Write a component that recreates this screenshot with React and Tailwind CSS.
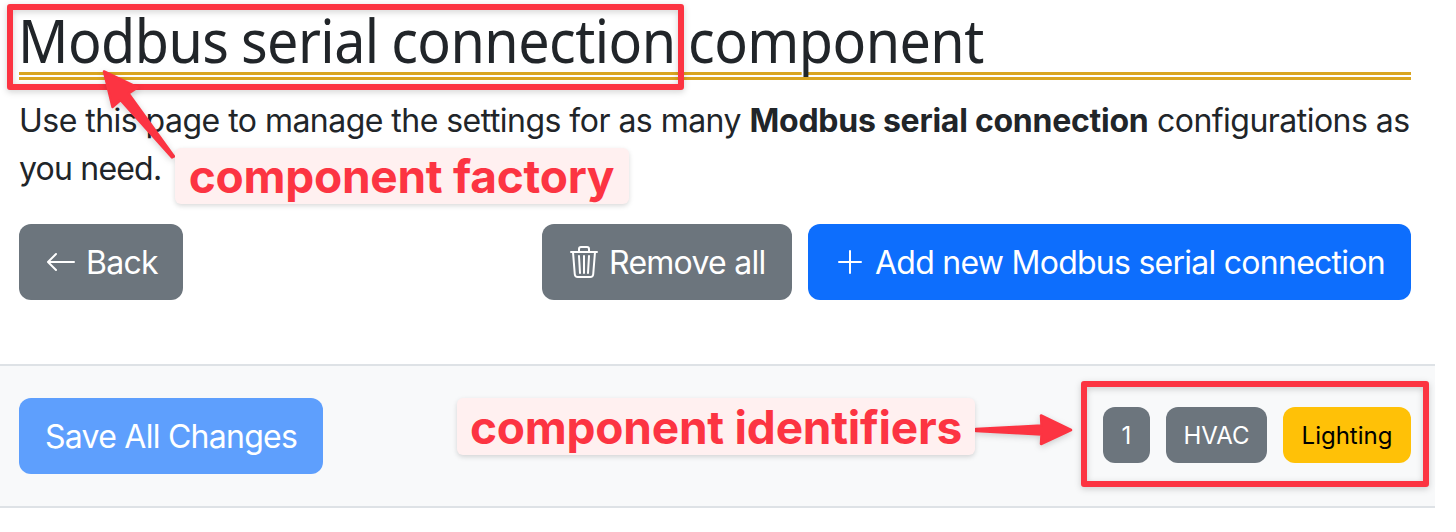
import { BsArrowLeft, BsPlusLg, BsTrash3 } from "react-icons/bs";

const button =
  "flex h-[76px] items-center rounded-xl pt-0.5 text-[32px] leading-[48px] tracking-[-0.74px] whitespace-nowrap text-white";
const badge =
  "flex h-14 items-center justify-center rounded-xl pt-0.5 text-2xl whitespace-nowrap";
const callout =
  "absolute flex items-center justify-center rounded-md bg-[#fff0f0] font-bold text-[#fc3442] text-[46px] leading-none whitespace-nowrap shadow-[0_2px_5px_rgba(0,0,0,0.15)]";
const frame =
  "absolute rounded-[3px] border-6 border-[#fc3442] drop-shadow-[0_2px_3px_rgba(0,0,0,0.18)]";

function Annotations() {
  return (
    <div className="pointer-events-none">
      <div className={`${frame} left-[7px] top-1 h-[86px] w-[677px]`} />
      <div className={`${frame} left-[1081px] top-[381px] h-[106px] w-[348px]`} />
      <svg
        className="absolute left-0 top-0 h-[532px] w-[1456px] drop-shadow-[0_2px_3px_rgba(0,0,0,0.18)]"
        viewBox="0 0 1456 532"
        fill="#fc3442"
        stroke="#fc3442"
        strokeWidth="2.5"
        strokeLinejoin="round"
      >
        <path d="M104 71.5 L137.5 87.5 L128.5 93.5 L174 156.5 L172 157.5 L120.5 100 L112.5 107 Z" />
        <path d="M1071 430 L1041 415.5 L1041.5 425.5 L976 429 L976 431 L1041.5 434.5 L1041 444 Z" />
      </svg>
      <div className={`${callout} left-[175px] top-[148px] h-14 w-[454px]`}>
        <span className="-ml-px tracking-[-0.25px]">component factory</span>
      </div>
      <div className={`${callout} left-[457px] top-[398px] h-[57px] w-[518px]`}>
        <span className="tracking-[-0.22px]">component identifiers</span>
      </div>
    </div>
  );
}

export default function App() {
  return (
    <div className="relative h-[532px] w-full overflow-hidden bg-white font-['Inter',sans-serif] text-[#212529]">
      <main className="w-[1435px]">
        <header className="pl-[19px] pr-6">
          <h1 className="h-20 border-b-8 border-double border-[#daa520] font-['Noto_Sans','Open_Sans',sans-serif] text-[60px] leading-[80px] tracking-[-0.6px] [word-spacing:-1.5px] whitespace-nowrap [text-shadow:-2px_0_#fff]">
            <span className="-ml-px inline-block origin-left scale-x-[0.928]">
              Modbus serial connection component
            </span>
          </h1>
          <p className="mt-[17px] text-[32px] leading-[48px] tracking-[-0.53px]">
            <span className="block whitespace-nowrap">
              Use this page to manage the settings for as many{" "}
              <strong className="font-bold tracking-[-0.25px]">Modbus serial connection</strong>{" "}
              configurations as
            </span>
            <span className="block tracking-[-0.8px]">you need.</span>
          </p>
          <div className="mt-[31px] flex gap-4">
            <button className={`${button} mr-auto w-[164px] bg-[#6c757d] pl-[26px]`}>
              <BsArrowLeft className="mr-[9px] mb-0.5 size-8" />
              Back
            </button>
            <button className={`${button} w-[250px] bg-[#6c757d] pl-[26px]`}>
              <BsTrash3 className="mr-[9px] mb-0.5 size-8" />
              Remove all
            </button>
            <button className={`${button} w-[603px] bg-[#0d6efd] pl-[26px]`}>
              <BsPlusLg className="mr-[9px] mb-0.5 size-8" />
              Add new Modbus serial connection
            </button>
          </div>
        </header>
        <section className="mt-16 flex h-36 items-center border-y-2 border-[#dee2e6] bg-[#f8f9fa] pl-[19px] pr-6">
          <button className={`${button} mr-auto w-[304px] bg-[#5e9ffd] pl-[26px]`}>
            Save All Changes
          </button>
          <div className="flex gap-4 pb-0.5">
            <span className={`${badge} w-[47px] bg-[#6c757d] text-white`}>1</span>
            <span className={`${badge} w-[101px] bg-[#6c757d] text-white`}>HVAC</span>
            <span className={`${badge} w-32 bg-[#ffc107] text-black`}>Lighting</span>
          </div>
        </section>
      </main>
      <Annotations />
    </div>
  );
}
